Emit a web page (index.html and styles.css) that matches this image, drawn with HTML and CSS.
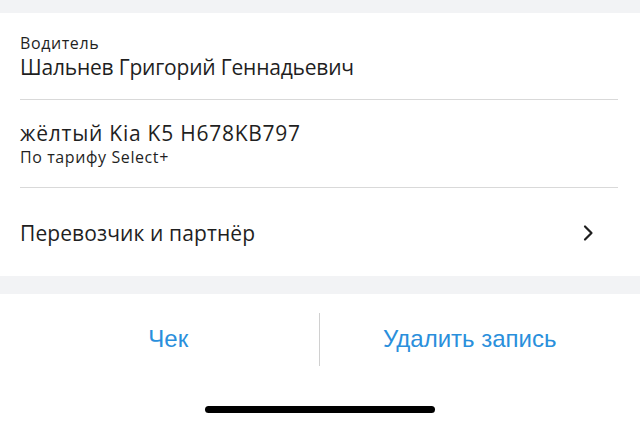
FILE: index.html
```html
<!DOCTYPE html>
<html lang="ru">
<head>
<meta charset="utf-8">
<link rel="stylesheet" href="styles.css">
</head>
<body>
<div class="screen">
  <div class="gap top"></div>
  <div class="card">
    <div class="row info">
      <div class="label">Водитель</div>
      <div class="value">Шальнев Григорий Геннадьевич</div>
    </div>
    <div class="row car">
      <div class="value">жёлтый Kia K5 H678KB797</div>
      <div class="label">По тарифу Select+</div>
    </div>
    <div class="row link">
      <div class="value">Перевозчик и партнёр</div>
      <svg class="chev" width="12" height="18" viewBox="0 0 12 18"><path d="M3 2.5 L9.5 9 L3 15.5" fill="none" stroke="#1e1e1e" stroke-width="2.2" stroke-linecap="round" stroke-linejoin="round"/></svg>
    </div>
  </div>
  <div class="gap bottom"></div>
  <div class="actions">
    <div class="btn left">Чек</div>
    <div class="divider"></div>
    <div class="btn right">Удалить запись</div>
  </div>
  <div class="home-wrap"><div class="home"></div></div>
</div>
</body>
</html>
```
FILE: styles.css
```css
html, body { margin: 0; padding: 0; }
body { width: 640px; height: 432px; overflow: hidden; background: #fff; font-family: "Open Sans", "Liberation Sans", sans-serif; color: #1f1f1f; }
.screen { display: flex; flex-direction: column; height: 432px; }
.gap { background: #f2f3f5; }
.gap.top { height: 13px; }
.gap.bottom { height: 18px; }
.card { background: #fff; display: flex; flex-direction: column; padding: 0 22px 0 20px; }
.row { border-bottom: 1px solid #d9d9d9; }
.row:last-child { border-bottom: none; }
.info { height: 87px; box-sizing: border-box; padding-top: 20px; }
.car { height: 88px; box-sizing: border-box; padding-top: 19px; }
.link { height: 88px; display: flex; align-items: center; justify-content: space-between; padding-top: 2px; box-sizing: border-box; }
.label { font-size: 16px; line-height: 20px; letter-spacing: 0.6px; }
.value { font-size: 21px; line-height: 28px; letter-spacing: -0.2px; }
.car .value { letter-spacing: 0.75px; }
.link .value { letter-spacing: 0.1px; }
.chev { margin-right: 24px; }
.actions { display: flex; align-items: center; height: 90px; }
.btn { flex: 1; text-align: center; font-family: "Liberation Sans", "Roboto", sans-serif; font-size: 24px; color: #2a8fdc; }
.btn.left { padding-left: 18px; }
.btn.right { padding-right: 20px; }
.divider { width: 1px; height: 53px; background: #d0d0d0; }
.home-wrap { display: flex; justify-content: center; padding-top: 22px; }
.home { width: 230px; height: 7px; border-radius: 4px; background: #000; }
```
